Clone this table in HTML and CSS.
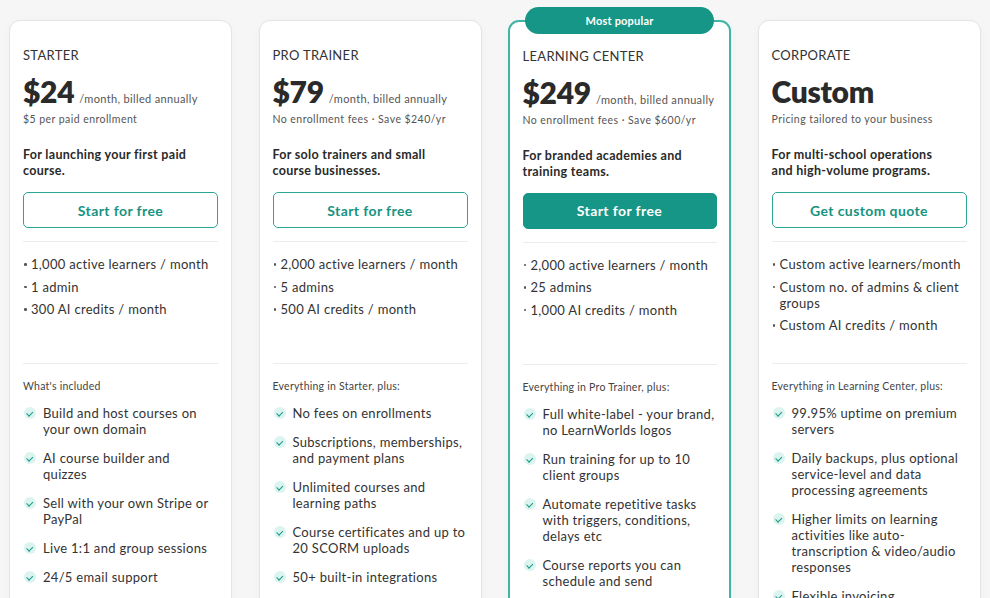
FILE: index.html
```html
<!DOCTYPE html>
<html lang="en">
<head>
<meta charset="utf-8">
<title>Pricing</title>
<link rel="stylesheet" href="styles.css">
</head>
<body>
<div class="plans">
  <div class="card">
    <div class="tier">STARTER</div>
    <div class="price-row"><span class="price">$24</span><span class="per">/month, billed annually</span></div>
    <div class="sub">$5 per paid enrollment</div>
    <div class="lead">For launching your first paid course.</div>
    <a class="btn">Start for free</a>
    <ul class="limits">
      <li>1,000 active learners / month</li>
      <li>1 admin</li>
      <li>300 AI credits / month</li>
    </ul>
    <div class="inc">What's included</div>
    <ul class="features">
      <li>Build and host courses on your own domain</li>
      <li>AI course builder and<br>quizzes</li>
      <li>Sell with your own Stripe or PayPal</li>
      <li>Live 1:1 and group sessions</li>
      <li>24/5 email support</li>
    </ul>
  </div>
  <div class="card">
    <div class="tier">PRO TRAINER</div>
    <div class="price-row"><span class="price">$79</span><span class="per">/month, billed annually</span></div>
    <div class="sub">No enrollment fees · Save $240/yr</div>
    <div class="lead">For solo trainers and small course businesses.</div>
    <a class="btn">Start for free</a>
    <ul class="limits">
      <li>2,000 active learners / month</li>
      <li>5 admins</li>
      <li>500 AI credits / month</li>
    </ul>
    <div class="inc">Everything in Starter, plus:</div>
    <ul class="features">
      <li>No fees on enrollments</li>
      <li>Subscriptions, memberships, and payment plans</li>
      <li>Unlimited courses and learning paths</li>
      <li>Course certificates and up to 20 SCORM uploads</li>
      <li>50+ built-in integrations</li>
    </ul>
  </div>
  <div class="card featured">
    <div class="badge">Most popular</div>
    <div class="tier">LEARNING CENTER</div>
    <div class="price-row"><span class="price">$249</span><span class="per">/month, billed annually</span></div>
    <div class="sub">No enrollment fees · Save $600/yr</div>
    <div class="lead">For branded academies and training teams.</div>
    <a class="btn btn-solid">Start for free</a>
    <ul class="limits">
      <li>2,000 active learners / month</li>
      <li>25 admins</li>
      <li>1,000 AI credits / month</li>
    </ul>
    <div class="inc">Everything in Pro Trainer, plus:</div>
    <ul class="features">
      <li>Full white-label - your brand, no LearnWorlds logos</li>
      <li>Run training for up to 10 client groups</li>
      <li>Automate repetitive tasks with triggers, conditions, delays etc</li>
      <li>Course reports you can schedule and send</li>
      <li>Dedicated success manager</li>
    </ul>
  </div>
  <div class="card">
    <div class="tier">CORPORATE</div>
    <div class="price-row"><span class="price">Custom</span></div>
    <div class="sub">Pricing tailored to your business</div>
    <div class="lead">For multi-school operations and high-volume programs.</div>
    <a class="btn">Get custom quote</a>
    <ul class="limits">
      <li>Custom active learners/month</li>
      <li>Custom no. of admins &amp; client groups</li>
      <li>Custom AI credits / month</li>
    </ul>
    <div class="inc">Everything in Learning Center, plus:</div>
    <ul class="features">
      <li>99.95% uptime on premium servers</li>
      <li>Daily backups, plus optional service-level and data processing agreements</li>
      <li>Higher limits on learning activities like auto-transcription &amp; video/audio responses</li>
      <li>Flexible invoicing</li>
    </ul>
  </div>
</div>
</body>
</html>
```

FILE: styles.css
```css
* { box-sizing: border-box; }
html, body { margin: 0; padding: 0; }
body {
  background: #f6f6f6;
  font-family: "Lato", "Open Sans", sans-serif;
  color: #2c2c2c;
  overflow: hidden;
  height: 598px;
}
.plans {
  display: flex;
  gap: 26.5px;
  padding: 20px 0 0 9px;
  align-items: flex-start;
}
.card {
  position: relative;
  width: 223px;
  height: 700px;
  background: #fff;
  border: 1.5px solid #e4e4e4;
  border-radius: 11px;
  padding: 26px 13px 0 13px;
  box-shadow: 0 2px 8px rgba(0,0,0,0.03);
}
.featured {
  border: 2px solid #3fb5a5;
  padding: 25.5px 12.5px 0 12.5px;
}
.badge {
  position: absolute;
  top: -15px;
  left: 15px;
  width: 189px;
  height: 27px;
  background: #169686;
  color: #fff;
  border-radius: 14px;
  font-size: 11px;
  font-weight: 700;
  letter-spacing: 0.2px;
  display: flex;
  align-items: center;
  justify-content: center;
}
.tier {
  font-size: 13px;
  line-height: 16px;
  letter-spacing: 0.3px;
  color: #333;
}
.price-row {
  display: flex;
  align-items: baseline;
  gap: 5px;
  margin-top: 10px;
  height: 36px;
}
.price {
  font-size: 30px;
  font-weight: 800;
  color: #2a2a2a;
  letter-spacing: -0.3px;
  line-height: 36px;
}
.per {
  font-size: 11px;
  letter-spacing: 0.35px;
  color: #555;
}
.sub {
  font-size: 10.5px;
  line-height: 14px;
  letter-spacing: 0.45px;
  color: #555;
  margin-top: 3px;
}
.lead {
  font-size: 12.5px;
  font-weight: 700;
  line-height: 16px;
  letter-spacing: 0.3px;
  margin-top: 21px;
  color: #2a2a2a;
  padding-right: 10px;
}
.btn {
  display: flex;
  align-items: center;
  justify-content: center;
  height: 36px;
  margin-top: 13px;
  border: 1.5px solid #2aa594;
  border-radius: 5px;
  color: #179382;
  font-size: 14px;
  font-weight: 700;
  letter-spacing: 0.4px;
}
.btn-solid {
  background: #169686;
  border-color: #169686;
  color: #fff;
}
.limits {
  list-style: none;
  margin: 13px 0 0;
  padding: 14px 0 0;
  border-top: 1.5px solid #ececec;
  height: 123px;
  border-bottom: 1.5px solid #ececec;
}
.limits li {
  font-size: 13px;
  line-height: 16px;
  letter-spacing: 0.3px;
  margin-bottom: 6.5px;
  color: #333;
  padding-left: 8px;
  position: relative;
}
.limits li::before {
  content: "";
  position: absolute;
  left: 1px;
  top: 7px;
  width: 2.5px;
  height: 2.5px;
  border-radius: 50%;
  background: #555;
}
.inc {
  font-size: 10.5px;
  line-height: 14px;
  letter-spacing: 0.25px;
  color: #444;
  margin-top: 15px;
}
.features {
  list-style: none;
  margin: 12px 0 0;
  padding: 0;
}
.features li {
  position: relative;
  padding-left: 20px;
  font-size: 13px;
  line-height: 16px;
  letter-spacing: 0.3px;
  color: #333;
  margin-bottom: 13px;
}
.features li::before {
  content: "";
  position: absolute;
  left: 1px;
  top: 2px;
  width: 12px;
  height: 12px;
  border-radius: 50%;
  background: #dcf4f0;
}
.features li::after {
  content: "";
  position: absolute;
  left: 5px;
  top: 5px;
  width: 2.5px;
  height: 4.5px;
  border: solid #1a9a89;
  border-width: 0 1.3px 1.3px 0;
  transform: rotate(45deg);
}
```
